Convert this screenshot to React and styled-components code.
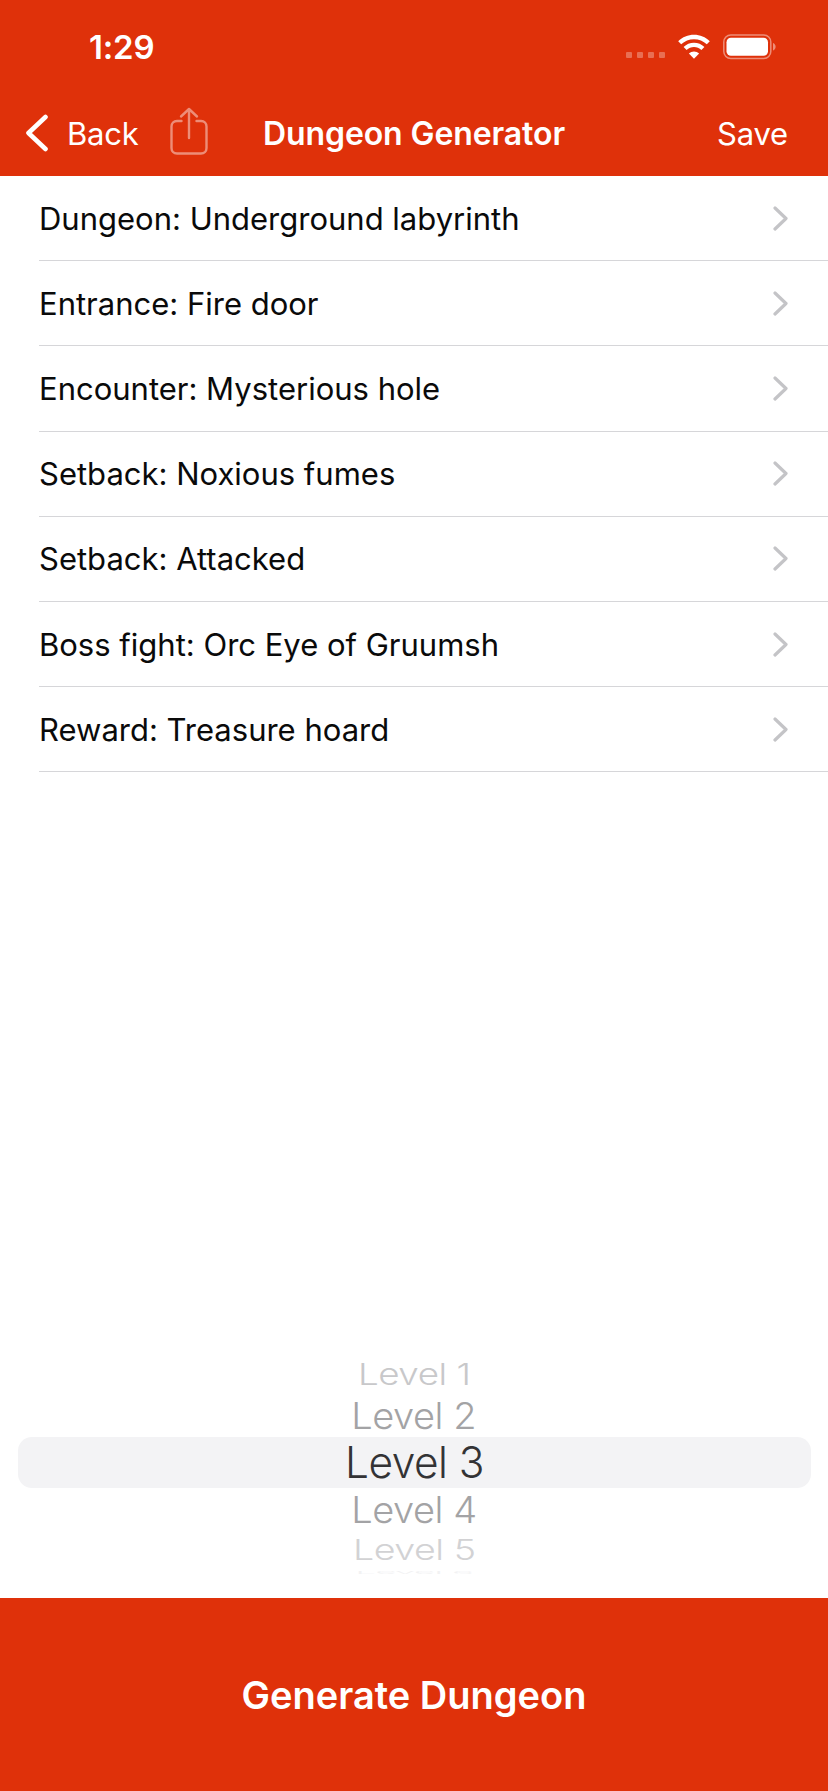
import React from 'react';
import styled, { createGlobalStyle } from 'styled-components';

const RED = '#df310a';

const GlobalStyle = createGlobalStyle`
  html, body {
    margin: 0;
    padding: 0;
    background: #fff;
  }
  body {
    font-family: Inter, "Liberation Sans", sans-serif;
  }
`;

const Screen = styled.div`
  width: 828px;
  height: 1791px;
  display: flex;
  flex-direction: column;
  background: #fff;
  overflow: hidden;
`;

const Header = styled.header`
  height: 176px;
  flex: none;
  background: ${RED};
  color: #fff;
  display: flex;
  flex-direction: column;
`;

const StatusBar = styled.div`
  height: 90px;
  padding: 0 52px 0 89px;
  display: flex;
  align-items: center;
  justify-content: space-between;
  box-sizing: border-box;
`;

const Time = styled.span`
  font-size: 33px;
  font-weight: 600;
  letter-spacing: -0.2px;
  position: relative;
  top: 2px;
`;

const StatusIcons = styled.div`
  display: flex;
  align-items: center;
  margin-top: 4px;
`;

const Dots = styled.div`
  display: flex;
  gap: 5px;
  margin-right: 12px;
  margin-top: 15px;
`;

const Dot = styled.i`
  width: 6px;
  height: 6px;
  border-radius: 1px;
  background: rgba(255, 255, 255, 0.3);
`;

const NavBar = styled.nav`
  flex: 1;
  display: grid;
  grid-template-columns: 1fr auto 1fr;
  align-items: center;
  padding: 0 25px;
`;

const NavLeft = styled.div`
  display: flex;
  align-items: center;
`;

const NavButton = styled.span`
  font-size: 31px;
  font-weight: 400;
  letter-spacing: -0.2px;
  margin-left: ${(p) => p.$offset || 0}px;
`;

const Title = styled.h1`
  margin: 0;
  font-size: 32px;
  font-weight: 600;
  letter-spacing: -0.1px;
`;

const SaveButton = styled(NavButton)`
  justify-self: end;
  margin-right: 15px;
`;

const ShareIcon = styled.svg`
  margin-left: 31px;
  margin-top: -4px;
`;

const Main = styled.main`
  flex: 1;
  display: flex;
  flex-direction: column;
  justify-content: space-between;
`;

const List = styled.ul`
  list-style: none;
  margin: 0;
  padding: 0 0 0 39px;
`;

const Row = styled.li`
  height: 85.2px;
  box-sizing: border-box;
  display: flex;
  align-items: center;
  justify-content: space-between;
  padding-right: 40px;
  border-bottom: 1px solid #d6d6d9;
  font-size: 31px;
  color: #0a0a0a;
`;

const Picker = styled.div`
  position: relative;
  display: flex;
  flex-direction: column;
  align-items: center;
  padding-bottom: 20px;
`;

const Selection = styled.div`
  position: absolute;
  left: 18px;
  right: 17px;
  top: 82px;
  height: 51px;
  border-radius: 14px;
  background: #f3f3f5;
`;

const Wheel = styled.div`
  position: relative;
  height: ${(p) => p.$height}px;
  display: flex;
  align-items: center;
  justify-content: center;
  font-size: 40px;
  line-height: 1;
  white-space: nowrap;
  width: 300px;
  color: ${(p) => p.$color};
`;

const WheelLabel = styled.span`
  display: block;
  font-weight: 350;
  letter-spacing: -0.5px;
  transform: scale(${(p) => p.$sx}, ${(p) => p.$sy});
`;

const Footer = styled.button`
  height: 193px;
  flex: none;
  border: 0;
  padding: 0;
  background: ${RED};
  color: #fff;
  font-family: inherit;
  font-size: 38px;
  font-weight: 600;
`;

const Wifi = () => (
  <svg width="34" height="26" viewBox="0 0 34 26" fill="#fff">
    <path d="M17 5.2c4.9 0 9.4 1.9 12.8 5.1l3-3.1C28.600 3.100 23 .8 17 .8S5.400 3.100 1.200 7.200l3 3.100C7.600 7.100 12.100 5.200 17 5.200z" />
    <path d="M17 13c2.800 0 5.400 1.100 7.400 3l3-3.100C24.600 10.200 21 8.700 17 8.700s-7.600 1.500-10.400 4.200l3 3.100c2-1.900 4.600-3 7.400-3z" />
    <path d="M17 24.800l5.100-5.300C20.700 18.200 18.900 17.400 17 17.400s-3.700.8-5.100 2.100z" />
  </svg>
);

const Battery = () => (
  <svg width="53" height="26" viewBox="0 0 53 26" style={{ marginLeft: 12 }}>
    <rect x="0.800" y="1" width="47" height="23.500" rx="7" fill="none" stroke="#fff" strokeOpacity="0.45" strokeWidth="1.500" />
    <rect x="3.500" y="3.700" width="41.500" height="18" rx="4.500" fill="#fff" />
    <path d="M50 9v7.500c1.600-.6 2.600-2.100 2.600-3.750S51.600 9.600 50 9z" fill="#fff" fillOpacity="0.45" />
  </svg>
);

const BackChevron = () => (
  <svg width="24" height="38" viewBox="0 0 24 38" fill="none" stroke="#fff" strokeWidth="4.600" strokeLinecap="round" strokeLinejoin="round">
    <path d="M20.500 3L3.500 19l17 16" />
  </svg>
);

const Share = () => (
  <ShareIcon width="38" height="48" viewBox="0 0 38 48" fill="none" stroke="#fff" strokeOpacity="0.45" strokeWidth="2.400" strokeLinecap="round" strokeLinejoin="round">
    <path d="M11.500 14H7c-3.300 0-5.500 2.200-5.500 5.500v21.500c0 3.300 2.200 5.500 5.500 5.500h24c3.300 0 5.500-2.200 5.500-5.500V19.500c0-3.300-2.200-5.500-5.500-5.500h-4.500" />
    <path d="M19 31V2M11 9.500L19 2l8 7.500" />
  </ShareIcon>
);

const RowChevron = () => (
  <svg width="15" height="25" viewBox="0 0 15 25" fill="none" stroke="#c4c4c7" strokeWidth="3.200" strokeLinecap="round" strokeLinejoin="round">
    <path d="M2 2l11 10.500L2 23" />
  </svg>
);

const entries = [
  'Dungeon: Underground labyrinth',
  'Entrance: Fire door',
  'Encounter: Mysterious hole',
  'Setback: Noxious fumes',
  'Setback: Attacked',
  'Boss fight: Orc Eye of Gruumsh',
  'Reward: Treasure hoard',
];

const levels = [
  { label: 'Level 1', height: 40, sx: 0.92, sy: 0.74, color: '#c8c8ca' },
  { label: 'Level 2', height: 42, sx: 0.95, sy: 0.9, color: '#a3a3a5' },
  { label: 'Level 3', height: 51, sx: 1.06, sy: 1.08, color: '#333335' },
  { label: 'Level 4', height: 44, sx: 0.95, sy: 0.9, color: '#a3a3a5' },
  { label: 'Level 5', height: 36, sx: 0.94, sy: 0.72, color: '#d2d2d4' },
  { label: 'Level 6', height: 10, sx: 0.9, sy: 0.1, color: '#f2f2f3' },
];

export default function App() {
  return (
    <Screen>
      <GlobalStyle />
      <Header>
        <StatusBar>
          <Time>1:29</Time>
          <StatusIcons>
            <Dots>
              <Dot />
              <Dot />
              <Dot />
              <Dot />
            </Dots>
            <Wifi />
            <Battery />
          </StatusIcons>
        </StatusBar>
        <NavBar>
          <NavLeft>
            <BackChevron />
            <NavButton $offset={18}>Back</NavButton>
            <Share />
          </NavLeft>
          <Title>Dungeon Generator</Title>
          <SaveButton>Save</SaveButton>
        </NavBar>
      </Header>
      <Main>
        <List>
          {entries.map((entry) => (
            <Row key={entry}>
              {entry}
              <RowChevron />
            </Row>
          ))}
        </List>
        <Picker>
          <Selection />
          {levels.map((level) => (
            <Wheel key={level.label} $height={level.height} $color={level.color}>
              <WheelLabel $sx={level.sx} $sy={level.sy}>{level.label}</WheelLabel>
            </Wheel>
          ))}
        </Picker>
      </Main>
      <Footer>Generate Dungeon</Footer>
    </Screen>
  );
}
